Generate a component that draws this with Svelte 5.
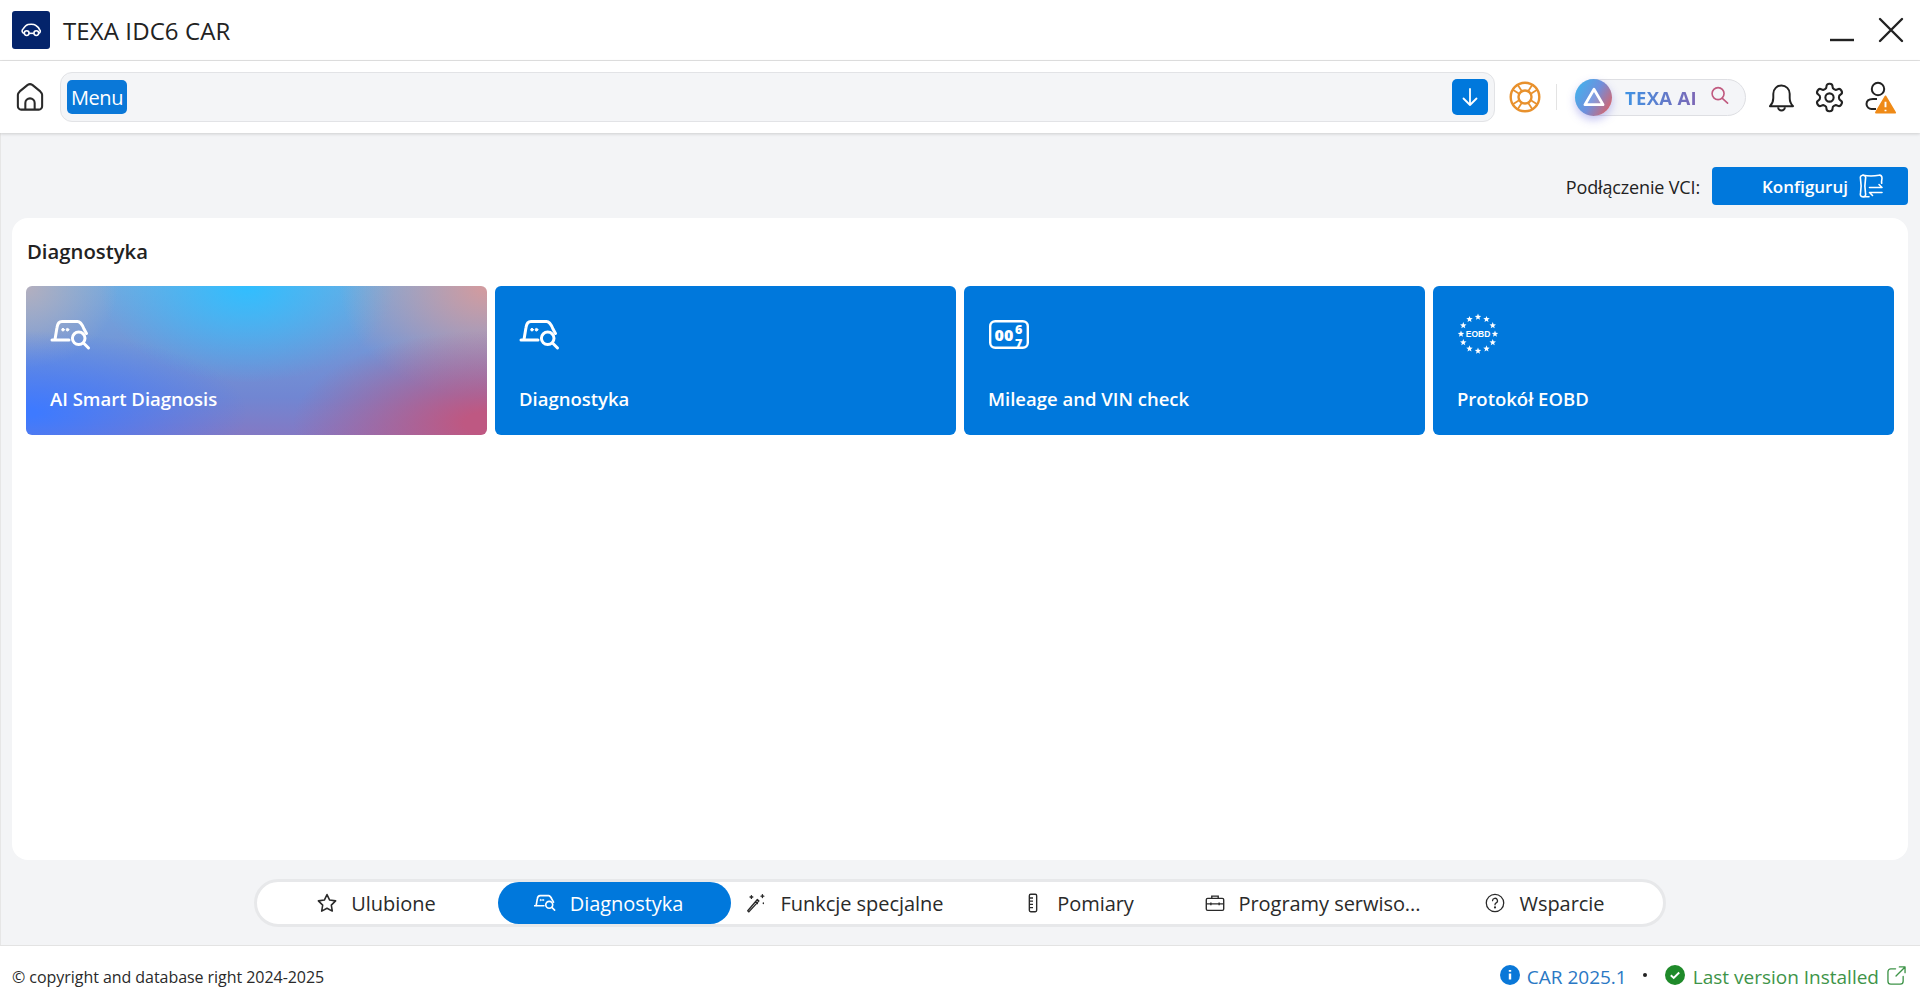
<script>
  const tiles = [
    { label: 'AI Smart Diagnosis', icon: 'diag', ai: true },
    { label: 'Diagnostyka', icon: 'diag' },
    { label: 'Mileage and VIN check', icon: 'odo' },
    { label: 'Protokół EOBD', icon: 'eobd' }
  ];
  const tabs = [
    { label: 'Ulubione', icon: 'star', cls: 'nudge-s' },
    { label: 'Diagnostyka', icon: 'diag', active: true, cls: 'nudge-l' },
    { label: 'Funkcje specjalne', icon: 'wand' },
    { label: 'Pomiary', icon: 'ruler', cls: 'nudge-r' },
    { label: 'Programy serwiso...', icon: 'case', cls: 'nudge-r' },
    { label: 'Wsparcie', icon: 'help' }
  ];
  function starPoints(cx, cy, r) {
    const pts = [];
    for (let i = 0; i < 10; i++) {
      const a = (i * Math.PI) / 5;
      const d = i % 2 ? r * 0.42 : r;
      pts.push(`${(cx + d * Math.sin(a)).toFixed(2)},${(cy - d * Math.cos(a)).toFixed(2)}`);
    }
    return pts.join(' ');
  }
  const stars = Array.from({ length: 12 }, (_, i) => {
    const a = (i * Math.PI) / 6;
    return starPoints(20 + 17 * Math.sin(a), 20 - 17 * Math.cos(a), 3.4);
  });
</script>

{#snippet diag()}
  <svg viewBox="0 0 40 30" fill="none" stroke="currentColor" stroke-width="3" stroke-linecap="round" stroke-linejoin="round">
    <path d="M1 20H18" />
    <path d="M4 19.500L6 7.500C6.500 4 8 1.500 11 1.500H26.500C29 1.500 31 4 33 9L35.500 13.500" />
    <circle cx="12" cy="9.700" r="1.300" fill="currentColor" stroke-width="1" />
    <circle cx="16.500" cy="9.700" r="1.300" fill="currentColor" stroke-width="1" />
    <circle cx="27.700" cy="18.300" r="6.300" fill="none" />
    <path d="M32.500 23l5 5" />
  </svg>
{/snippet}

{#snippet tileIcon(name)}
  {#if name === 'diag'}
    <span class="ticon">{@render diag()}</span>
  {:else if name === 'odo'}
    <span class="ticon">
      <svg viewBox="0 0 40 30" fill="none" stroke="currentColor" stroke-width="2.400">
        <rect x="1.200" y="1.200" width="37.600" height="26.600" rx="5" />
        <text class="odotxt"><tspan x="5.500" y="21">00</tspan><tspan x="26" y="14" class="small">6</tspan><tspan x="26" y="27.500" class="small">7</tspan></text>
      </svg>
    </span>
  {:else}
    <span class="ticon">
      <svg class="eobdsvg" viewBox="0 0 40 40" fill="#fff">
        {#each stars as s}
          <polygon points={s} />
        {/each}
        <text x="20" y="23" class="eobd">EOBD</text>
      </svg>
    </span>
  {/if}
{/snippet}

{#snippet tabIcon(name)}
  {#if name === 'star'}
    <svg viewBox="0 0 24 24" fill="none" stroke="currentColor" stroke-width="1.700" stroke-linejoin="round"><path d="M12 2.800l2.900 6 6.500.9-4.700 4.600 1.100 6.500L12 17.700l-5.800 3.100 1.100-6.500-4.700-4.600 6.500-.9z" /></svg>
  {:else if name === 'diag'}
    {@render diag()}
  {:else if name === 'wand'}
    <svg viewBox="0 0 24 24" fill="none" stroke="currentColor" stroke-width="1.500" stroke-linecap="round" stroke-linejoin="round"><path d="M3 20.500l1.200 1.200 11-12-1.700-1.500zM11.500 10.500l2 2" /><path d="M7 4v3M5.500 5.500h3M19 3v3M17.500 4.500h3M20 12v.5" /></svg>
  {:else if name === 'ruler'}
    <svg viewBox="0 0 24 24" fill="none" stroke="currentColor" stroke-width="1.500"><rect x="8" y="2.500" width="8" height="19" rx="1.500" /><path d="M8 6.500h4M8 10h4M8 13.500h4M8 17h4" /></svg>
  {:else if name === 'case'}
    <svg viewBox="0 0 24 24" fill="none" stroke="currentColor" stroke-width="1.500"><rect x="2.500" y="7" width="19" height="13" rx="1.500" /><path d="M8.500 7V4.500h7V7M2.500 13h19M7.500 11.500v3M16.500 11.500v3" /></svg>
  {:else}
    <svg viewBox="0 0 24 24" fill="none" stroke="currentColor" stroke-width="1.400" stroke-linecap="round"><circle cx="12" cy="12" r="9.500" /><path d="M9.300 9.500a2.700 2.700 0 1 1 4 2.400c-.9.500-1.300 1-1.300 2" /><circle cx="12" cy="16.800" r=".5" fill="currentColor" /></svg>
  {/if}
{/snippet}

<div class="app">
  <header class="titlebar">
    <div class="brand">
      <span class="logo">
        <svg viewBox="0 0 24 16" fill="none" stroke="#fff" stroke-width="1.800" stroke-linejoin="round"><path d="M3.500 11.800C1.500 11.500 1 9.500 1.500 8 3 6 5 2.500 8 1.800c3-.6 7-.4 9 1 2 1.200 4.500 4 5 6 .2 1.500-.5 2.700-1.500 3" /><circle cx="6.500" cy="11.500" r="2.700" /><circle cx="17.500" cy="11.500" r="2.700" /><path d="M9.300 11.800h5.400" /></svg>
      </span>
      <h1>TEXA IDC6 CAR</h1>
    </div>
    <div class="winbtns">
      <svg class="min" viewBox="0 0 24 4"><path d="M0 2h24" stroke="#222" stroke-width="2.400" /></svg>
      <svg class="close" viewBox="0 0 26 26"><path d="M2 2l22 22M24 2L2 24" stroke="#222" stroke-width="2.400" stroke-linecap="round" /></svg>
    </div>
  </header>

  <nav class="toolbar">
    <svg class="home" viewBox="0 0 30 30" fill="none" stroke="#2a2a2a" stroke-width="2.200" stroke-linejoin="round"><path d="M2 12.500C2 11 3 10 4 9l8.500-7c1.500-1 3.500-1 5 0L26 9c1 1 2 2 2 3.500v12.500a3.500 3.500 0 0 1-3.500 3.500h-19A3.500 3.500 0 0 1 2 25z" /><path d="M10 28.500v-7a5 5 0 0 1 10 0v7" /></svg>
    <div class="crumb">
      <span class="menu">Menu</span>
      <span class="down">
        <svg viewBox="0 0 20 20" fill="none" stroke="#fff" stroke-width="1.800" stroke-linecap="round" stroke-linejoin="round"><path d="M10 2v16M3.500 11.500L10 18l6.500-6.500" /></svg>
      </span>
    </div>
    <svg class="ring" viewBox="0 0 32 32" fill="none" stroke="#e8912d" stroke-width="2.400"><circle cx="16" cy="16" r="14.300" /><circle cx="16" cy="16" r="6.500" /><path d="M8.500 3.500l4.500 7M23.500 3.500l-4.500 7M8.500 28.500l4.500-7M23.500 28.500l-4.500-7M3.500 8.500l7 4.500M28.500 8.500l-7 4.500M3.500 23.500l7-4.500M28.500 23.500l-7-4.500" stroke-width="1.800" /></svg>
    <span class="sep"></span>
    <div class="ai">
      <span class="aiball">
        <svg viewBox="0 0 24 22" fill="none" stroke="#fff" stroke-width="3" stroke-linejoin="round"><path d="M12 2.500L22 19.500H2z" fill="rgba(255,255,255,.12)" /></svg>
      </span>
      <span class="aitext">TEXA AI</span>
      <svg class="aisearch" viewBox="0 0 20 20" fill="none" stroke="#c0597f" stroke-width="1.700" stroke-linecap="round"><circle cx="8.500" cy="8" r="6.300" /><path d="M13 13l5.500 5" /></svg>
    </div>
    <svg class="bell" viewBox="0 0 28 30" fill="none" stroke="#222" stroke-width="2" stroke-linejoin="round"><path d="M2 24c2.500-2.500 3.500-5 3.500-8.500v-4.500a8.500 8.500 0 0 1 17 0v4.500c0 3.500 1 6 3.500 8.500z" /><path d="M10.500 25a3.500 3.500 0 0 0 7 0" /></svg>
    <svg class="gear" viewBox="0 0 24 24" fill="none" stroke="#222" stroke-width="1.500" stroke-linejoin="round"><path d="M12.220 2h-.44a2 2 0 0 0-2 2v.18a2 2 0 0 1-1 1.730l-.43.250a2 2 0 0 1-2 0l-.15-.08a2 2 0 0 0-2.730.730l-.22.380a2 2 0 0 0 .730 2.730l.15.100a2 2 0 0 1 1 1.720v.510a2 2 0 0 1-1 1.740l-.15.090a2 2 0 0 0-.730 2.730l.22.380a2 2 0 0 0 2.730.730l.15-.08a2 2 0 0 1 2 0l.43.250a2 2 0 0 1 1 1.730V20a2 2 0 0 0 2 2h.44a2 2 0 0 0 2-2v-.18a2 2 0 0 1 1-1.730l.43-.25a2 2 0 0 1 2 0l.15.080a2 2 0 0 0 2.730-.730l.22-.39a2 2 0 0 0-.730-2.730l-.15-.08a2 2 0 0 1-1-1.740v-.5a2 2 0 0 1 1-1.740l.15-.09a2 2 0 0 0 .730-2.730l-.22-.38a2 2 0 0 0-2.730-.730l-.15.080a2 2 0 0 1-2 0l-.43-.25a2 2 0 0 1-1-1.730V4a2 2 0 0 0-2-2z" /><circle cx="12" cy="12" r="3" /></svg>
    <span class="user">
      <svg viewBox="0 0 28 32" fill="none" stroke="#222" stroke-width="2"><circle cx="13" cy="8" r="6.200" /><path d="M12 18H8c-4 0-6.500 2-6.500 5s2.500 5 5 5H11" /></svg>
      <svg class="warn" viewBox="0 0 22 20"><path d="M11 1.500L21 18.500H1z" fill="#ef8a17" stroke="#ef8a17" stroke-width="2" stroke-linejoin="round" /><path d="M11 7v6M11 15.500v1.500" stroke="#fff" stroke-width="2" /></svg>
    </span>
  </nav>

  <main class="content">
    <div class="vci">
      <span>Podłączenie VCI:</span>
      <button class="config">
        Konfiguruj
        <svg viewBox="0 0 24 24" fill="none" stroke="#fff" stroke-width="1.600" stroke-linecap="round" stroke-linejoin="round"><path d="M4 1.200C1.500 1.200 1 3 1.500 5c.8 4.500.8 9.500 0 14-.5 2 0 3.800 2.500 3.800h6" /><path d="M4 1.200c2.500 0 3 1.800 2.500 3.800-.8 4.500-.8 9.500 0 14 .5 2 0 3.800-2.500 3.800" /><path d="M4 1.200c5 1 11 1 16 0 2-.3 3 1 3 3 0 1.500-.8 2.800-.3 5" /><path d="M10.500 13.500H23l-3-3M23 18.500H10.500l3 3" /></svg>
      </button>
    </div>

    <section class="card">
      <h2>Diagnostyka</h2>
      <div class="tiles">
        {#each tiles as t}
          <div class="tile" class:ai-tile={t.ai}>
            {@render tileIcon(t.icon)}
            <span class="tlabel">{t.label}</span>
          </div>
        {/each}
      </div>
    </section>

    <div class="tabs">
      {#each tabs as t}
        <div class="tab {t.cls ?? ''}" class:active={t.active}>
          <span class="tabicon">{@render tabIcon(t.icon)}</span>
          <span>{t.label}</span>
        </div>
      {/each}
    </div>
  </main>

  <footer class="footer">
    <span class="copy">© copyright and database right 2024-2025</span>
    <div class="status">
      <svg class="si" viewBox="0 0 20 20"><circle cx="10" cy="10" r="10" fill="#0a78d8" /><path d="M10 8.500v6M10 5v1.800" stroke="#fff" stroke-width="2.400" /></svg>
      <span class="car">CAR 2025.1</span>
      <span class="dot"></span>
      <svg class="si" viewBox="0 0 20 20"><circle cx="10" cy="10" r="10" fill="#1f8a2a" /><path d="M5.800 10.300l2.900 2.700 5.500-5.500" fill="none" stroke="#fff" stroke-width="1.900" /></svg>
      <span class="last">Last version Installed</span>
      <svg class="ext" viewBox="0 0 20 20" fill="none" stroke="#3e9448" stroke-width="1.400" stroke-linecap="round" stroke-linejoin="round"><path d="M9 3H4a3 3 0 0 0-3 3v10a3 3 0 0 0 3 3h10a3 3 0 0 0 3-3v-5" /><path d="M9.500 10.500L19 1M13 1h6v6" /></svg>
    </div>
  </footer>
</div>

<style>
  :global(body) { margin: 0; background: #fff; }
  .app {
    width: 1920px; height: 1008px; display: flex; flex-direction: column;
    font-family: "Open Sans", "Noto Sans", "Liberation Sans", sans-serif; color: #222; overflow: hidden;
  }
  .titlebar {
    height: 60px; flex: none; border-bottom: 1px solid #e3e3e3; display: flex;
    align-items: center; justify-content: space-between; padding: 0 16px 0 12px; background: #fff;
  }
  .brand { display: flex; align-items: center; gap: 13px; }
  .logo { width: 38px; height: 38px; border-radius: 3px; background: #04246b; display: flex; align-items: center; justify-content: center; }
  .logo svg { width: 21px; height: 14px; }
  h1 { margin: 0; font-size: 24px; font-weight: 400; letter-spacing: 0.100px; color: #222; }
  .winbtns { display: flex; align-items: center; gap: 24px; }
  .min { width: 24px; height: 4px; margin-top: 20px; }
  .close { width: 26px; height: 26px; }

  .toolbar {
    height: 72px; flex: none; display: flex; align-items: center; background: #fff; padding: 0 14px 0 16px;
    box-shadow: 0 1px 3px rgba(0,0,0,.16); position: relative; z-index: 1;
  }
  .home { width: 28px; height: 30px; flex: none; margin-right: 16px; }
  .crumb {
    width: 1435px; height: 50px; box-sizing: border-box; background: #f4f5f7; border: 1px solid #e2e3e6;
    border-radius: 12px; display: flex; align-items: center; justify-content: space-between; padding: 0 6px 0 6px;
  }
  .menu { background: #0a78d8; color: #fff; border-radius: 5px; height: 34px; line-height: 35px; padding: 0 4px; font-size: 20px; letter-spacing: -0.450px; }
  .down { width: 36px; height: 36px; background: #0078dc; border-radius: 5px; display: flex; align-items: center; justify-content: center; }
  .down svg { width: 20px; height: 20px; }
  .ring { width: 32px; height: 32px; flex: none; margin-left: 14px; }
  .sep { width: 1px; height: 26px; background: #e3e3e3; margin: 0 18px 0 15px; flex: none; }
  .ai {
    width: 171px; height: 37px; border: 1px solid #dedfe3; border-radius: 19px; background: #f4f5f8;
    display: flex; align-items: center; position: relative; flex: none; box-sizing: border-box; padding-left: 49px; margin-right: 22px;
  }
  .aiball {
    position: absolute; left: -1px; top: -1px; width: 37px; height: 37px; border-radius: 50%;
    background: linear-gradient(120deg, #3fb4ee 5%, #6f8fdc 50%, #e3605f 95%);
    box-shadow: 0 4px 8px rgba(90,90,220,.35); display: flex; align-items: center; justify-content: center;
  }
  .aiball svg { width: 22px; height: 20px; }
  .aitext {
    font-size: 18.500px; font-weight: 700; letter-spacing: 0.300px;
    background: linear-gradient(90deg, #3f93e4, #7d66b5); -webkit-background-clip: text; background-clip: text; color: transparent;
  }
  .aisearch { width: 19px; height: 19px; margin-left: 13px; margin-top: -3px; }
  .bell { width: 27px; height: 29px; flex: none; margin-right: 18px; }
  .gear { width: 33px; height: 33px; flex: none; margin-right: 19px; }
  .user { position: relative; width: 28px; height: 32px; flex: none; }
  .user svg { width: 28px; height: 32px; display: block; }
  .user .warn { position: absolute; width: 21px; height: 19px; left: 10px; top: 14px; }

  .content { flex: 1; min-height: 0; background: #f3f4f6; display: flex; flex-direction: column; padding: 0 12px; border-left: 1px solid #e6e6e6; box-sizing: border-box; }
  .vci { height: 85px; flex: none; display: flex; align-items: flex-end; justify-content: flex-end; gap: 12px; padding-bottom: 13px; box-sizing: border-box; font-size: 18px; letter-spacing: -0.150px; }
  .vci > span { line-height: 36px; }
  .config {
    width: 196px; height: 38px; border: 0; background: #0078dc; color: #fff; border-radius: 4px; display: flex; align-items: center; justify-content: flex-end;
    gap: 11px; padding: 1px 25px 0 0; font: 600 17px "Open Sans", sans-serif; letter-spacing: 0;
  }
  .config svg { width: 24px; height: 24px; margin-top: -1px; }

  .card { height: 642px; flex: none; background: #fff; border-radius: 16px; margin-left: -1px; padding: 0 14px; box-sizing: border-box; }
  h2 { margin: 0; height: 68px; line-height: 66px; font-size: 20.300px; font-weight: 600; color: #222; padding-left: 1px; }
  .tiles { display: grid; grid-template-columns: repeat(4, 1fr); gap: 8px; }
  .tile { height: 149px; border-radius: 6px; background: #0078dc; color: #fff; padding: 34px 24px 0; box-sizing: border-box; display: flex; flex-direction: column; }
  .ai-tile {
    background:
      radial-gradient(ellipse 42% 62% at 100% 92%, rgba(190,88,130,1) 12%, rgba(190,88,130,0) 100%),
      radial-gradient(ellipse 32% 75% at 100% 0%, rgba(208,155,160,1) 5%, rgba(208,155,160,0) 100%),
      radial-gradient(ellipse 48% 55% at 0% 85%, rgba(62,122,255,1) 5%, rgba(62,122,255,0) 100%),
      radial-gradient(ellipse 20% 55% at 0% 0%, rgba(180,175,190,1) 0%, rgba(180,175,190,0) 100%),
      radial-gradient(ellipse 32% 65% at 48% 0%, rgba(48,190,255,1) 0%, rgba(48,190,255,0) 100%),
      linear-gradient(180deg, #74a9de 0%, #7186d2 75%, #8379c4 100%);
  }
  .ticon { display: block; width: 40px; height: 30px; margin-left: 1px; }
  .ticon svg { width: 40px; height: 30px; overflow: visible; display: block; }
  .ticon .eobdsvg { width: 40px; height: 40px; margin-top: -6px; }
  .odotxt { font: 800 16px "Open Sans", sans-serif; fill: #fff; stroke: none; }
  .odotxt .small { font-size: 12.500px; }
  .eobd { font: 700 8.500px "Liberation Sans", sans-serif; text-anchor: middle; fill: #fff; }
  .tlabel { margin-top: 36px; font-size: 18.500px; font-weight: 600; letter-spacing: 0; line-height: 26px; }

  .tabs {
    margin: 19px 0 0 241px; width: 1412px; height: 48px; box-sizing: border-box; background: #fff; border: 3px solid #e7e8ea; border-radius: 24px;
    display: grid; grid-template-columns: 241px 233px 226px 237px 231px 1fr; flex: none; font-size: 20px; letter-spacing: -0.050px;
  }
  .tab { display: flex; align-items: center; justify-content: center; gap: 14px; border-radius: 21px; height: 42px; white-space: nowrap; color: #2a2a2a; }
  .tab.active { background: #0078dc; color: #fff; }
  .nudge-s { padding-right: 3px; gap: 13px; }
  .nudge-l { padding-right: 12px; }
  .nudge-r { padding-left: 5px; gap: 13px; }
  .tabicon { width: 22px; height: 22px; display: flex; align-items: center; }
  .tabicon svg { width: 22px; height: 22px; }

  .footer {
    height: 63px; flex: none; background: #fff; border-top: 1px solid #e3e3e3; display: flex; align-items: center; justify-content: space-between; padding: 0 14px 0 12px;
    box-sizing: border-box;
  }
  .copy { font-size: 16px; letter-spacing: -0.050px; color: #2a2a2a; }
  .status { display: flex; align-items: center; font-size: 19px; letter-spacing: 0; font-weight: 500; }
  .si { width: 20px; height: 20px; margin-top: -4px; }
  .car { color: #2a78c4; margin-left: 7px; }
  .dot { width: 4px; height: 4px; border-radius: 50%; background: #222; margin: -4px 18px 0 16px; }
  .last { color: #3e9448; margin-left: 8px; }
  .ext { width: 19px; height: 19px; margin-left: 8px; margin-top: -4px; }
</style>
